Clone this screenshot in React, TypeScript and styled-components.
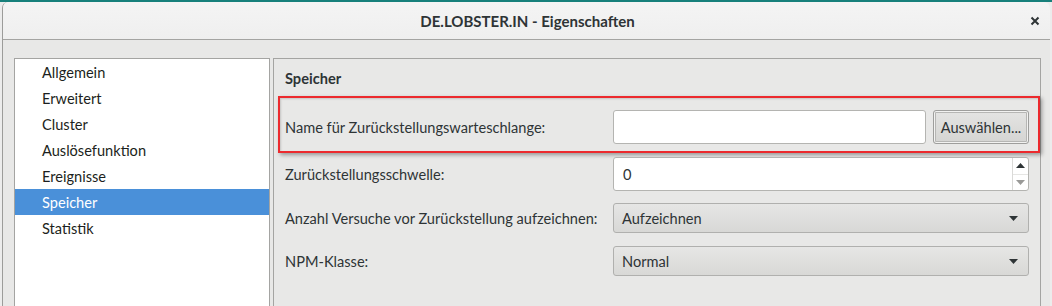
import styled, { createGlobalStyle } from "styled-components";

const GlobalStyle = createGlobalStyle`
  html, body {
    margin: 0;
    padding: 0;
    width: 1052px;
    height: 306px;
    overflow: hidden;
    background: #e4e4e2;
  }
  body {
    font-family: Lato, "Noto Sans", sans-serif;
    font-size: 14.6px;
    color: #2e3436;
  }
`;

const Desktop = styled.div`
  height: 306px;
  background: linear-gradient(#17807b 0 2px, #ececec 2px);
  padding: 2px 2px 0 2px;
  box-sizing: border-box;
`;

const Window = styled.div`
  height: 100%;
  display: flex;
  flex-direction: column;
  border-left: 1px solid #9c9c9a;
  border-top-left-radius: 6px;
  border-top-right-radius: 6px;
  overflow: hidden;
  background: #e8e8e7;
`;

const TitleBar = styled.div`
  height: 37px;
  flex: none;
  position: relative;
  display: flex;
  align-items: center;
  justify-content: center;
  background: linear-gradient(#f4f4f4, #efefef);
  border-bottom: 1px solid #a4a4a2;
`;

const Title = styled.div`
  font-weight: 700;
  font-size: 15px;
  color: #2e3436;
  margin-left: 2px;
`;

const CloseButton = styled.div`
  position: absolute;
  right: 10px;
  top: 14px;
  width: 10px;
  height: 10px;
  display: flex;
`;

const Content = styled.div`
  flex: 1;
  display: flex;
  gap: 3px;
  padding: 18px 0 0 11px;
`;

const List = styled.div`
  width: 256px;
  flex: none;
  box-sizing: border-box;
  background: #ffffff;
  border: 1px solid #a4a4a2;
  border-bottom: none;
`;

const ListItem = styled.div<{ $selected?: boolean }>`
  height: 26px;
  display: flex;
  align-items: center;
  padding-left: 27px;
  background: ${(p) => (p.$selected ? "#4a90d9" : "transparent")};
  color: ${(p) => (p.$selected ? "#ffffff" : "#1c1f20")};
`;

const Panel = styled.div`
  width: 768px;
  flex: none;
  box-sizing: border-box;
  border: 1px solid #a4a4a2;
  border-bottom: none;
  padding: 11px 11px 0 11px;
  position: relative;
`;

const Heading = styled.div`
  font-weight: 700;
  color: #2e3436;
  height: 17px;
  line-height: 17px;
  margin-bottom: 23px;
`;

const Form = styled.div`
  display: flex;
  flex-direction: column;
  gap: 13px;
`;

const Row = styled.div<{ $highlight?: boolean; $tight?: boolean }>`
  display: flex;
  align-items: center;
  position: relative;
  margin-bottom: ${(p) => (p.$tight ? "-1px" : "0")};

  ${(p) =>
    p.$highlight &&
    `
    &::after {
      content: "";
      position: absolute;
      left: -7px;
      right: -11px;
      top: -14px;
      bottom: -9px;
      border: 2px solid #ec2a2e;
      box-shadow: 2px 2px 4px rgba(0, 0, 0, 0.35), inset 1px 1px 2px rgba(0, 0, 0, 0.15);
      pointer-events: none;
    }
  `}
`;

const Label = styled.div`
  flex: 1;
  color: #2e3436;
`;

const Control = styled.div`
  width: 416px;
  flex: none;
  display: flex;
  gap: 7px;
`;

const TextInput = styled.div`
  flex: 1;
  height: 34px;
  box-sizing: border-box;
  background: #ffffff;
  border: 1px solid #b4b4b1;
  border-radius: 3px;
  display: flex;
  align-items: center;
  padding-left: 9px;
`;

const Button = styled.div`
  width: 96px;
  height: 34px;
  box-sizing: border-box;
  border: 1px solid #9e9e9c;
  border-radius: 3px;
  background: linear-gradient(#e4e4e3, #d4d4d2);
  box-shadow: inset 0 0 0 1px #f2f2f1, inset 0 0 0 2px #b6b6b4;
  display: flex;
  align-items: center;
  justify-content: center;
  color: #2e3436;
`;

const SpinBox = styled.div`
  flex: 1;
  height: 34px;
  box-sizing: border-box;
  background: #ffffff;
  border: 1px solid #b4b4b1;
  border-radius: 3px;
  display: flex;
`;

const SpinValue = styled.div`
  flex: 1;
  display: flex;
  align-items: center;
  padding-left: 9px;
`;

const SpinButtons = styled.div`
  width: 15px;
  display: flex;
  flex-direction: column;
  border-left: 1px solid #dadad8;
`;

const SpinButton = styled.div<{ $disabled?: boolean }>`
  flex: 1;
  display: flex;
  align-items: center;
  justify-content: center;
  color: ${(p) => (p.$disabled ? "#9a9a98" : "#2e3436")};

  & + & {
    border-top: 1px solid #e6e6e4;
  }
`;

const Combo = styled.div`
  flex: 1;
  height: 30px;
  box-sizing: border-box;
  border: 1px solid #b0b0ae;
  border-radius: 3px;
  background: linear-gradient(#e6e6e5, #d8d8d6);
  display: flex;
  align-items: center;
  justify-content: space-between;
  padding: 0 10px 0 8px;
`;

function Triangle({ down = true }: { down?: boolean }) {
  return (
    <svg width="9" height="5" viewBox="0 0 9 5">
      <path d={down ? "M0 0 H9 L4.5 5 Z" : "M0 5 H9 L4.5 0 Z"} fill="currentColor" />
    </svg>
  );
}

const navItems = [
  "Allgemein",
  "Erweitert",
  "Cluster",
  "Auslösefunktion",
  "Ereignisse",
  "Speicher",
  "Statistik",
];

export default function App() {
  return (
    <>
      <GlobalStyle />
      <Desktop>
        <Window>
          <TitleBar>
            <Title>DE.LOBSTER.IN - Eigenschaften</Title>
            <CloseButton>
              <svg width="10" height="10" viewBox="0 0 10 10">
                <path d="M1.5 1.5 L8.5 8.5 M8.5 1.5 L1.5 8.5" stroke="#2e3436" strokeWidth="2" />
              </svg>
            </CloseButton>
          </TitleBar>
          <Content>
            <List>
              {navItems.map((item) => (
                <ListItem key={item} $selected={item === "Speicher"}>
                  {item}
                </ListItem>
              ))}
            </List>
            <Panel>
              <Heading>Speicher</Heading>
              <Form>
                <Row $highlight>
                  <Label>Name für Zurückstellungswarteschlange:</Label>
                  <Control>
                    <TextInput />
                    <Button>Auswählen...</Button>
                  </Control>
                </Row>
                <Row $tight>
                  <Label>Zurückstellungsschwelle:</Label>
                  <Control>
                    <SpinBox>
                      <SpinValue>0</SpinValue>
                      <SpinButtons>
                        <SpinButton>
                          <Triangle down={false} />
                        </SpinButton>
                        <SpinButton $disabled>
                          <Triangle />
                        </SpinButton>
                      </SpinButtons>
                    </SpinBox>
                  </Control>
                </Row>
                <Row>
                  <Label>Anzahl Versuche vor Zurückstellung aufzeichnen:</Label>
                  <Control>
                    <Combo>
                      <span>Aufzeichnen</span>
                      <Triangle />
                    </Combo>
                  </Control>
                </Row>
                <Row>
                  <Label>NPM-Klasse:</Label>
                  <Control>
                    <Combo>
                      <span>Normal</span>
                      <Triangle />
                    </Combo>
                  </Control>
                </Row>
              </Form>
            </Panel>
          </Content>
        </Window>
      </Desktop>
    </>
  );
}
